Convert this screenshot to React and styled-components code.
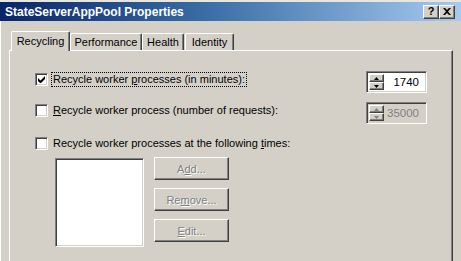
import React from "react";
import styled, { createGlobalStyle } from "styled-components";

const GlobalStyle = createGlobalStyle`
  html, body {
    margin: 0;
    padding: 0;
    background: #d4d0c8;
    overflow: hidden;
  }
  body {
    font-family: "Liberation Sans", Arial, sans-serif;
    font-size: 11px;
    color: #000;
  }
`;

const Window = styled.div`
  width: 461px;
  height: 261px;
  background: #d4d0c8;
  border-top: 2px solid #e8e6e0;
  box-sizing: border-box;
  display: flex;
  flex-direction: column;
  overflow: hidden;
`;

const TitleBar = styled.div`
  height: 19px;
  flex: none;
  display: flex;
  align-items: center;
  padding: 0 6px 0 5px;
  background: linear-gradient(to right, #0a246a 0%, #3a6ea5 45%, #a6caf0 100%);
`;

const Title = styled.div`
  flex: 1;
  color: #fff;
  font-weight: bold;
  font-size: 12px;
`;

const CaptionButton = styled.div`
  width: 16px;
  height: 14px;
  box-sizing: border-box;
  background: #d4d0c8;
  border-top: 1px solid #fff;
  border-left: 1px solid #fff;
  border-right: 1px solid #404040;
  border-bottom: 1px solid #404040;
  box-shadow: inset -1px -1px 0 #808080;
  display: flex;
  align-items: center;
  justify-content: center;
  font-weight: bold;
  font-size: 11px;
  line-height: 1;
`;

const Client = styled.div`
  flex: 1;
  border-left: 1px solid #fff;
  padding: 10px 0 0 8px;
  display: flex;
  flex-direction: column;
`;

const TabRow = styled.div`
  display: flex;
  height: 20px;
  margin-left: 2px;
  margin-bottom: -1px;
  position: relative;
  z-index: 1;
`;

const Tab = styled.div`
  box-sizing: border-box;
  width: ${(p) => p.$w}px;
  height: ${(p) => (p.$active ? 20 : 17)}px;
  margin-top: ${(p) => (p.$active ? 0 : 2)}px;
  margin-left: ${(p) => p.$gap || 0}px;
  background: #d4d0c8;
  border-top: 1px solid #fff;
  border-left: 1px solid #fff;
  border-right: 1px solid #404040;
  border-radius: 2px 2px 0 0;
  box-shadow: inset -1px 0 0 #808080;
  display: flex;
  align-items: center;
  justify-content: center;
  padding-bottom: ${(p) => (p.$active ? 2 : 0)}px;
  white-space: nowrap;
`;

const Panel = styled.div`
  width: 444px;
  height: 230px;
  box-sizing: border-box;
  border-top: 1px solid #fff;
  border-left: 1px solid #fff;
  border-right: 1px solid #404040;
  box-shadow: inset -1px 0 0 #808080;
  padding: 20px 0 0 25px;
  display: flex;
  flex-direction: column;
`;

const OptionRow = styled.div`
  width: 392px;
  height: ${(p) => p.$h}px;
  margin-top: ${(p) => p.$mt}px;
  display: flex;
  justify-content: space-between;
  align-items: flex-start;
`;

const CheckLabel = styled.label`
  display: flex;
  align-items: flex-start;
  margin-top: 2px;
`;

const Box = styled.span`
  width: 13px;
  height: 13px;
  box-sizing: border-box;
  flex: none;
  background: #fff;
  border-top: 1px solid #808080;
  border-left: 1px solid #808080;
  border-right: 1px solid #fff;
  border-bottom: 1px solid #fff;
  box-shadow: inset 1px 1px 0 #404040, inset -1px -1px 0 #d4d0c8;
  display: flex;
  align-items: center;
  justify-content: center;
`;

const LabelText = styled.span`
  margin-left: 3px;
  padding: 0 1px;
  margin-top: -1px;
  line-height: 13px;
  border: 1px dotted ${(p) => (p.$focus ? "#000" : "transparent")};
  white-space: nowrap;
`;

const Key = styled.span`
  text-decoration: underline;
`;

const Spinner = styled.div`
  width: 61px;
  height: 22px;
  box-sizing: border-box;
  background: ${(p) => (p.$disabled ? "#d4d0c8" : "#fff")};
  border-top: 1px solid #808080;
  border-left: 1px solid #808080;
  border-right: 1px solid #fff;
  border-bottom: 1px solid #fff;
  box-shadow: inset 1px 1px 0 #404040, inset -1px -1px 0 #d4d0c8;
  padding: 2px;
  display: flex;
`;

const SpinButtons = styled.div`
  width: 15px;
  flex: none;
  display: flex;
  flex-direction: column;
`;

const SpinButton = styled.div`
  flex: 1;
  box-sizing: border-box;
  background: #d4d0c8;
  border-top: 1px solid #fff;
  border-left: 1px solid #fff;
  border-right: 1px solid #404040;
  border-bottom: 1px solid #404040;
  box-shadow: inset -1px -1px 0 #808080;
  display: flex;
  align-items: center;
  justify-content: center;
`;

const SpinValue = styled.div`
  flex: 1;
  text-align: right;
  padding-right: 5px;
  line-height: 17px;
  color: ${(p) => (p.$disabled ? "#808080" : "#000")};
  font-size: 11.5px;
`;

const Schedule = styled.div`
  display: flex;
  margin: 8px 0 0 20px;
`;

const TimeList = styled.div`
  width: 89px;
  height: 89px;
  box-sizing: border-box;
  background: #fff;
  border-top: 1px solid #808080;
  border-left: 1px solid #808080;
  border-right: 1px solid #fff;
  border-bottom: 1px solid #fff;
  box-shadow: inset 1px 1px 0 #404040, inset -1px -1px 0 #d4d0c8;
`;

const ButtonColumn = styled.div`
  display: flex;
  flex-direction: column;
  gap: 8px;
  margin-left: 10px;
  margin-top: -1px;
`;

const PushButton = styled.div`
  width: 75px;
  height: 23px;
  box-sizing: border-box;
  background: #d4d0c8;
  border-top: 1px solid #fff;
  border-left: 1px solid #fff;
  border-right: 1px solid #404040;
  border-bottom: 1px solid #404040;
  box-shadow: inset -1px -1px 0 #808080;
  display: flex;
  align-items: center;
  justify-content: center;
  color: #808080;
  text-shadow: 1px 1px 0 #fff;
`;

const Check = () => (
  <svg width="7" height="7" viewBox="0 0 7 7">
    <path d="M0 2v3l2 2h1l4-4V0L2.5 4.5z" fill="#000" />
  </svg>
);

const Arrow = ({ up, color }) => (
  <svg width="5" height="3" viewBox="0 0 5 3">
    <path d={up ? "M2.5 0L5 3H0z" : "M0 0h5L2.5 3z"} fill={color} />
  </svg>
);

const CloseGlyph = () => (
  <svg width="8" height="7" viewBox="0 0 8 7">
    <path d="M0 0h2l2 2 2-2h2L5 3.5 8 7H6L4 5 2 7H0l3-3.5z" fill="#000" />
  </svg>
);

const Spin = ({ value, disabled }) => {
  const c = disabled ? "#808080" : "#000";
  return (
    <Spinner $disabled={disabled}>
      <SpinButtons>
        <SpinButton>
          <Arrow up color={c} />
        </SpinButton>
        <SpinButton>
          <Arrow color={c} />
        </SpinButton>
      </SpinButtons>
      <SpinValue $disabled={disabled}>{value}</SpinValue>
    </Spinner>
  );
};

const tabs = [
  { label: "Recycling", w: 59, active: true },
  { label: "Performance", w: 72 },
  { label: "Health", w: 42 },
  { label: "Identity", w: 49, gap: 1 },
];

export default function App() {
  return (
    <>
      <GlobalStyle />
      <Window>
        <TitleBar>
          <Title>StateServerAppPool Properties</Title>
          <CaptionButton>?</CaptionButton>
          <CaptionButton>
            <CloseGlyph />
          </CaptionButton>
        </TitleBar>
        <Client>
          <TabRow>
            {tabs.map((t) => (
              <Tab key={t.label} $w={t.w} $active={t.active} $gap={t.gap}>
                {t.label}
              </Tab>
            ))}
          </TabRow>
          <Panel>
            <OptionRow $h={22} $mt={0}>
              <CheckLabel>
                <Box>
                  <Check />
                </Box>
                <LabelText $focus>
                  Recycle worker <Key>p</Key>rocesses (in minutes):
                </LabelText>
              </CheckLabel>
              <Spin value="1740" />
            </OptionRow>
            <OptionRow $h={22} $mt={9}>
              <CheckLabel>
                <Box />
                <LabelText>
                  <Key>R</Key>ecycle worker process (number of requests):
                </LabelText>
              </CheckLabel>
              <Spin value="35000" disabled />
            </OptionRow>
            <OptionRow $h={15} $mt={11}>
              <CheckLabel>
                <Box />
                <LabelText>
                  Recycle worker processes at the following <Key>t</Key>imes:
                </LabelText>
              </CheckLabel>
            </OptionRow>
            <Schedule>
              <TimeList />
              <ButtonColumn>
                <PushButton>
                  A<Key>d</Key>d...
                </PushButton>
                <PushButton>
                  Re<Key>m</Key>ove...
                </PushButton>
                <PushButton>
                  <Key>E</Key>dit...
                </PushButton>
              </ButtonColumn>
            </Schedule>
          </Panel>
        </Client>
      </Window>
    </>
  );
}
